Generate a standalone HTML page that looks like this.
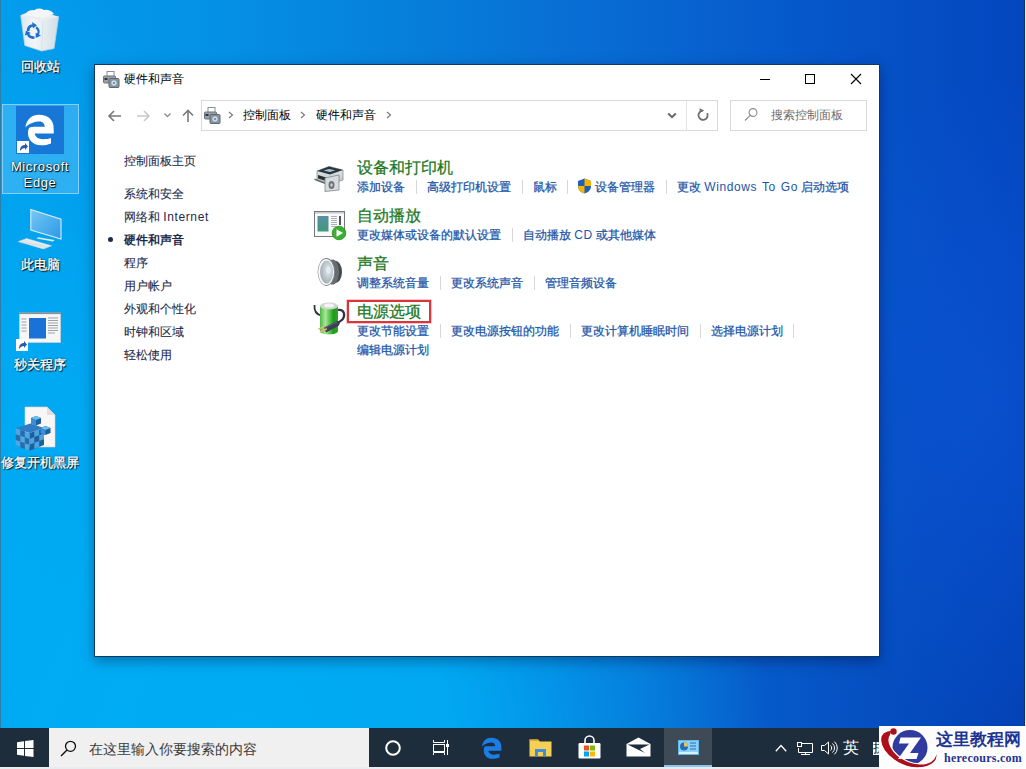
<!DOCTYPE html>
<html><head><meta charset="utf-8">
<style>
*{margin:0;padding:0;box-sizing:border-box}
html,body{width:1026px;height:769px;overflow:hidden}
body{position:relative;font-family:"Liberation Sans",sans-serif;background:#0a7ad8}
.a{position:absolute;white-space:nowrap}
#bg{position:absolute;left:0;top:0;width:1026px;height:769px;
background:radial-gradient(ellipse 240px 640px at 0px 560px,rgba(0,172,244,.85) 0%,rgba(0,172,244,.6) 50%,rgba(0,172,244,0) 100%),radial-gradient(ellipse 220px 330px at 990px 400px,rgba(14,90,225,.45) 0%,rgba(14,90,225,0) 100%),radial-gradient(ellipse 360px 520px at 1026px 769px,rgba(0,10,80,.08) 0%,rgba(0,10,80,0) 100%),radial-gradient(ellipse 520px 600px at 250px 769px,rgba(0,172,244,1) 0%,rgba(0,172,244,.9) 40%,rgba(0,172,244,.5) 65%,rgba(0,172,244,.2) 86%,rgba(0,172,244,0) 100%),linear-gradient(90deg,#029aea 0%,#0492e6 20%,#0680da 39%,#086cd4 58%,#0658ca 78%,#0448c0 97%,#0446be 100%)}
#bg:after{content:"";position:absolute;left:0;top:0;width:1px;height:728px;background:#2b7fa8}
#bg:before{content:"";position:absolute;left:1024px;top:0;width:2px;height:728px;background:linear-gradient(90deg,#12306e 0 50%,#dceeff 50% 100%)}
.dl{color:#fff;font-size:13px;line-height:16px;text-align:center;-webkit-text-stroke-width:.3px;text-shadow:1px 1px 1px #000,0 0 2px rgba(0,0,0,.85)}
#win{position:absolute;left:94px;top:64px;width:786px;height:593px;background:#fff;border:1px solid #0d3a60;box-shadow:0 4px 12px rgba(0,0,40,.35)}
.t12{font-size:12px;line-height:16px}
.side{color:#1e2a4a;-webkit-text-stroke-width:.1px}
.h{font-size:16px;line-height:20px;color:#1b781e;-webkit-text-stroke-width:.25px}
.lk{font-size:12px;line-height:16px;color:#1c55a8;-webkit-text-stroke-width:.25px}
.sep{position:absolute;width:1px;height:14px;background:#d8d8d8}
#tb{position:absolute;left:0;top:728px;width:1026px;height:39px;background:#1d2d3b}
svg{position:absolute;overflow:visible}
i.c{display:inline-block;width:1em;font-style:normal;text-align:center}
.lat{letter-spacing:.6px;word-spacing:1px;-webkit-text-stroke-width:0}
</style></head><body>
<div id="bg"></div>

<!-- DESKTOP -->
<!-- recycle bin -->
<svg style="left:16px;top:4px" width="48" height="52" viewBox="0 0 48 52">
  <defs><linearGradient id="rb" x1="0" x2="1"><stop offset="0" stop-color="#d9e8f2"/><stop offset=".35" stop-color="#f3f6f8"/><stop offset=".6" stop-color="#e6edf1"/><stop offset="1" stop-color="#cfdde6"/></linearGradient></defs>
  <path d="M4.7 11.5 L17 6.5 L42.6 12.8 L38 44.5 L25.7 47 L8.8 41.5 Z" fill="url(#rb)" stroke="#b8d4e6" stroke-width=".8"/>
  <path d="M4.7 11.5 L17 6.5 L42.6 12.8 L27 17 Z" fill="#e9eef1"/>
  <path d="M9 11 Q12 5 18 6.5 Q22 3 28 6 Q34 5 38 10 L27 14 Z" fill="#f4f6f7"/>
  <path d="M27 17 L25.7 47" stroke="#d6e2ea" stroke-width="1"/>
  <g fill="#1e70cc">
    <path d="M11 27 C10.5 23 13 20.5 16.5 20.3 L16 18 L21 21.2 L17 24.5 L16.8 22.8 C14.5 23 13.3 24.8 13.6 27Z"/>
    <path d="M20.5 22.5 C23.5 23.8 24.5 27.5 23 30.5 L25 31.5 L19.8 34 L19.6 28.8 L21.2 29.6 C22 27.8 21.5 25.6 19.5 24.6Z"/>
    <path d="M18.5 34.8 C15 35.5 12 33.5 11 30.8 L8.8 31.6 L10 26.5 L14.8 29 L13.2 29.8 C14.2 31.8 16.2 32.6 18.5 32.2Z"/>
  </g>
</svg>
<div class="a dl" style="left:10px;top:59px;width:60px"><i class="c">回</i><i class="c">收</i><i class="c">站</i></div>

<!-- edge -->
<div class="a" style="left:2px;top:104px;width:77px;height:90px;background:rgba(160,215,255,.28);border:1px solid rgba(200,235,255,.55)"></div>
<div class="a" style="left:16px;top:106px;width:48px;height:48px;background:#1876d6"></div>
<svg style="left:16px;top:106px" width="48" height="48" viewBox="0 0 48 48">
  <path fill-rule="evenodd" d="M9.4 21.5C10.5 13 16 8.7 23 8.7C32 8.7 37.6 14 37.6 21.5L37.8 27.5L18.7 27.5C19.2 31 22.5 33.2 27 33.2C30 33.2 33 32.8 35 32L35 37.5C32 38.8 28.5 39.3 25 39.3C16.5 39.3 12 33.5 12 27C12 24.5 12.5 22.5 13.5 21.5C15 21 17 20.8 18.5 20.8L28.8 20.8C28.5 17.8 26.5 15.6 23.7 15.6C19 15.6 13 17.5 9.4 21.5Z" fill="#fff"/>
</svg>
<div class="a" style="left:17px;top:141px;width:12px;height:12px;background:#fff"></div>
<svg style="left:18px;top:142px" width="10" height="10" viewBox="0 0 10 10"><path d="M2 9 C2 5 4 3 7 3 L7 1 L10 4.5 L7 8 L7 6 C5 6 3.5 7 2 9Z" fill="#2a5aa8"/></svg>
<div class="a dl" style="left:0px;top:159px;width:80px"><span class="lat">Microsoft</span><br><span class="lat">Edge</span></div>

<!-- this pc -->
<svg style="left:17px;top:206px" width="46" height="44" viewBox="0 0 46 44">
  <defs><linearGradient id="mo" x1="0" y1="0" x2="1" y2="1"><stop offset="0" stop-color="#7cc8f4"/><stop offset=".5" stop-color="#4eb0ee"/><stop offset="1" stop-color="#2f9ae6"/></linearGradient></defs>
  <path d="M13.8 3.4 L44 13.2 L44 33 L13.8 24 Z" fill="url(#mo)" stroke="#d6ecfa" stroke-width="1.1"/>
  <path d="M21 31.2 L37.7 34 L36 35.6 L19.5 32.6Z" fill="#e4ecf0"/>
  <path d="M1.3 35.6 L9.6 32.5 L34.6 39.8 L26.3 42.9 Z" fill="#eef2f4" stroke="#c8d4da" stroke-width=".6"/>
  <g stroke="#c2ccd2" stroke-width=".5"><path d="M4 34.8 L29 42M6.5 33.8 L31.5 41M3 36.5 L28 39.8"/></g>
</svg>
<div class="a dl" style="left:10px;top:257px;width:60px"><i class="c">此</i><i class="c">电</i><i class="c">脑</i></div>

<!-- <i class="c">秒</i><i class="c">关</i><i class="c">程</i><i class="c">序</i> -->
<svg style="left:19px;top:312px" width="42" height="31" viewBox="0 0 42 31">
  <rect x="0.5" y="1" width="41" height="29.5" fill="#f6f6f6" stroke="#c9d0d6" stroke-width=".8"/>
  <rect x="0" y="0.5" width="42" height="1.6" fill="#8d8f92"/>
  <rect x="10" y="6" width="17" height="20.5" fill="#1a72d8"/>
  <g stroke="#9aa3aa" stroke-width="1"><path d="M2.5 7h5M2.5 10h5M2.5 13h5M2.5 16h5M2.5 19h5M29 6h10M29 8.5h10M29 11h10M29 13.5h10M29 16h10M29 18.5h10M29 21h7"/></g>
</svg>
<div class="a" style="left:16px;top:339px;width:12px;height:12px;background:#fff"></div>
<svg style="left:17px;top:340px" width="10" height="10" viewBox="0 0 10 10"><path d="M2 9 C2 5 4 3 7 3 L7 1 L10 4.5 L7 8 L7 6 C5 6 3.5 7 2 9Z" fill="#2a5aa8"/></svg>
<div class="a dl" style="left:0px;top:357px;width:80px"><i class="c">秒</i><i class="c">关</i><i class="c">程</i><i class="c">序</i></div>

<!-- <i class="c">修</i><i class="c">复</i><i class="c">开</i><i class="c">机</i><i class="c">黑</i><i class="c">屏</i> -->
<svg style="left:14px;top:404px" width="44" height="48" viewBox="0 0 44 48">
  <path d="M11 3 L33 3 L41 11 L41 43 L11 43 Z" fill="#f8f6f6" stroke="#d4d0d0" stroke-width=".6"/>
  <path d="M33 3 L33 11 L41 11 Z" fill="#e6dede"/>
  <path d="M1.7 24.3 L16.4 19.4 L30 24 L15.4 29 Z" fill="#2f7cc4"/>
  <path d="M1.7 24.3 L15.4 29 L15.4 46.7 L1.7 41 Z" fill="#4ea6e2"/>
  <path d="M15.4 29 L30 24 L30 41 L15.4 46.7 Z" fill="#1d5f9e"/>
  <g fill="#1d5f9e" opacity=".8">
    <path d="M6.3 25.9 L10.8 27.4 L10.8 33.3 L6.3 31.8Z"/>
    <path d="M1.7 30.2 L6.3 31.8 L6.3 37.6 L1.7 36Z"/>
    <path d="M10.8 33.3 L15.4 34.9 L15.4 40.8 L10.8 39.2Z"/>
    <path d="M6.3 37.6 L10.8 39.2 L10.8 45 L6.3 43.3Z"/>
  </g>
  <g fill="#57aee6" opacity=".85">
    <path d="M20.3 27.3 L25.2 25.6 L25.2 31.3 L20.3 33Z"/>
    <path d="M15.4 34.9 L20.3 33 L20.3 38.8 L15.4 40.8Z"/>
    <path d="M25.2 31.3 L30 29.6 L30 35.3 L25.2 37Z"/>
    <path d="M20.3 38.8 L25.2 37 L25.2 42.8 L20.3 44.8Z"/>
  </g>
  <path d="M17 14 L22 12 L27 14 L27 19.5 L22 21.5 L17 19.5Z" fill="#1d5f9e"/>
  <path d="M17 14 L22 12 L27 14 L22 16Z" fill="#6cc0f0"/>
  <path d="M17 14 L22 16 L22 21.5 L17 19.5Z" fill="#3a8fd6"/>
  <path d="M26.5 24 L31.5 22 L36.5 24 L36.5 29 L31.5 31 L26.5 29Z" fill="#1d5f9e"/>
  <path d="M26.5 24 L31.5 22 L36.5 24 L31.5 26Z" fill="#6cc0f0"/>
  <path d="M26.5 24 L31.5 26 L31.5 31 L26.5 29Z" fill="#3a8fd6"/>
</svg>
<div class="a dl" style="left:-5px;top:455px;width:90px"><i class="c">修</i><i class="c">复</i><i class="c">开</i><i class="c">机</i><i class="c">黑</i><i class="c">屏</i></div>

<!-- WINDOW -->
<div id="win"></div>
<!-- title bar -->
<svg style="left:103px;top:71px" width="17" height="17" viewBox="0 0 17 17">
  <rect x="4" y="0.5" width="7" height="5" fill="#fff" stroke="#8a9096"/>
  <rect x="0.5" y="5" width="12" height="7" rx="1" fill="#9aa1a8" stroke="#6d747b"/>
  <rect x="1.5" y="7" width="3" height="2" fill="#333"/>
  <rect x="6" y="7.5" width="10" height="9" rx="1" fill="#8d969e" stroke="#5f676e"/>
  <circle cx="11" cy="12" r="3.3" fill="#c8dbe8" stroke="#6b7f8e" stroke-width=".8"/>
  <circle cx="11" cy="12" r="1" fill="#6b7f8e"/>
</svg>
<div class="a t12" style="left:124px;top:71px;color:#000"><i class="c">硬</i><i class="c">件</i><i class="c">和</i><i class="c">声</i><i class="c">音</i></div>
<div class="a" style="left:760px;top:79px;width:10px;height:1px;background:#000"></div>
<div class="a" style="left:805px;top:74px;width:10px;height:10px;border:1px solid #000"></div>
<svg style="left:850px;top:73px" width="12" height="12" viewBox="0 0 12 12"><path d="M1 1L11 11M11 1L1 11" stroke="#000" stroke-width="1.1"/></svg>

<!-- nav -->
<svg style="left:107px;top:109px" width="16" height="14" viewBox="0 0 16 14"><path d="M14 7H2M7 2L2 7L7 12" fill="none" stroke="#7a7a7a" stroke-width="1.6"/></svg>
<svg style="left:136px;top:109px" width="16" height="14" viewBox="0 0 16 14"><path d="M1 7H13M8 2L13 7L8 12" fill="none" stroke="#c9c9c9" stroke-width="1.6"/></svg>
<svg style="left:163px;top:112px" width="9" height="6" viewBox="0 0 9 6"><path d="M1.5 1.5L4.5 4.5L7.5 1.5" fill="none" stroke="#8a8a8a" stroke-width="1.3"/></svg>
<svg style="left:181px;top:109px" width="14" height="14" viewBox="0 0 14 14"><path d="M7 13V1.5M2 6.5L7 1.5L12 6.5" fill="none" stroke="#7a7a7a" stroke-width="1.6"/></svg>

<div class="a" style="left:201px;top:100px;width:517px;height:31px;border:1px solid #d9d9d9"></div>
<div class="a" style="left:686px;top:101px;width:1px;height:29px;background:#e3e3e3"></div>
<svg style="left:204px;top:107px" width="17" height="17" viewBox="0 0 17 17">
  <rect x="4" y="0.5" width="7" height="5" fill="#fff" stroke="#8a9096"/>
  <rect x="0.5" y="5" width="12" height="7" rx="1" fill="#9aa1a8" stroke="#6d747b"/>
  <rect x="1.5" y="7" width="3" height="2" fill="#333"/>
  <rect x="6" y="7.5" width="10" height="9" rx="1" fill="#8d969e" stroke="#5f676e"/>
  <circle cx="11" cy="12" r="3.3" fill="#c8dbe8" stroke="#6b7f8e" stroke-width=".8"/>
  <circle cx="11" cy="12" r="1" fill="#6b7f8e"/>
</svg>
<svg style="left:228px;top:111px" width="6" height="8" viewBox="0 0 6 8"><path d="M1 1L4.5 4L1 7" fill="none" stroke="#7a7a7a" stroke-width="1.2"/></svg>
<div class="a t12" style="left:243px;top:107px;color:#000"><i class="c">控</i><i class="c">制</i><i class="c">面</i><i class="c">板</i></div>
<svg style="left:300px;top:111px" width="6" height="8" viewBox="0 0 6 8"><path d="M1 1L4.5 4L1 7" fill="none" stroke="#7a7a7a" stroke-width="1.2"/></svg>
<div class="a t12" style="left:316px;top:107px;color:#000"><i class="c">硬</i><i class="c">件</i><i class="c">和</i><i class="c">声</i><i class="c">音</i></div>
<svg style="left:386px;top:111px" width="6" height="8" viewBox="0 0 6 8"><path d="M1 1L4.5 4L1 7" fill="none" stroke="#7a7a7a" stroke-width="1.2"/></svg>
<svg style="left:667px;top:112px" width="10" height="7" viewBox="0 0 10 7"><path d="M1.2 1.5L5 5.2L8.8 1.5" fill="none" stroke="#666" stroke-width="2"/></svg>
<svg style="left:696px;top:107px" width="14" height="15" viewBox="0 0 14 15"><path d="M7 3.6A4.6 4.6 0 1 0 11.2 6.2" fill="none" stroke="#707070" stroke-width="1.8"/><path d="M3.6 1.2L8.2 3.6L3.6 6Z" fill="#707070"/></svg>

<div class="a" style="left:730px;top:100px;width:137px;height:31px;border:1px solid #d9d9d9"></div>
<svg style="left:743px;top:107px" width="15" height="15" viewBox="0 0 15 15"><circle cx="10" cy="5.5" r="3.9" fill="none" stroke="#8c8c8c" stroke-width="1.1"/><path d="M7.2 8.3L2 13.5" stroke="#8c8c8c" stroke-width="1.1"/></svg>
<div class="a t12" style="left:771px;top:107px;color:#6d6d6d"><i class="c">搜</i><i class="c">索</i><i class="c">控</i><i class="c">制</i><i class="c">面</i><i class="c">板</i></div>

<!-- sidebar -->
<div class="a t12 side" style="left:124px;top:153px"><i class="c">控</i><i class="c">制</i><i class="c">面</i><i class="c">板</i><i class="c">主</i><i class="c">页</i></div>
<div class="a t12 side" style="left:124px;top:186px"><i class="c">系</i><i class="c">统</i><i class="c">和</i><i class="c">安</i><i class="c">全</i></div>
<div class="a t12 side" style="left:124px;top:209px"><i class="c">网</i><i class="c">络</i><i class="c">和</i> <span class="lat">Internet</span></div>
<div class="a" style="left:108px;top:237px;width:5px;height:5px;border-radius:50%;background:#1e2a4a"></div>
<div class="a t12 side" style="left:124px;top:232px;font-weight:bold;-webkit-text-stroke-width:0"><i class="c">硬</i><i class="c">件</i><i class="c">和</i><i class="c">声</i><i class="c">音</i></div>
<div class="a t12 side" style="left:124px;top:255px"><i class="c">程</i><i class="c">序</i></div>
<div class="a t12 side" style="left:124px;top:278px"><i class="c">用</i><i class="c">户</i><i class="c">帐</i><i class="c">户</i></div>
<div class="a t12 side" style="left:124px;top:301px"><i class="c">外</i><i class="c">观</i><i class="c">和</i><i class="c">个</i><i class="c">性</i><i class="c">化</i></div>
<div class="a t12 side" style="left:124px;top:324px"><i class="c">时</i><i class="c">钟</i><i class="c">和</i><i class="c">区</i><i class="c">域</i></div>
<div class="a t12 side" style="left:124px;top:347px"><i class="c">轻</i><i class="c">松</i><i class="c">使</i><i class="c">用</i></div>

<!-- MAIN -->
<svg style="left:314px;top:166px" width="30" height="26" viewBox="0 0 30 26">
  <defs><linearGradient id="pb" x1="0" x2="0" y1="0" y2="1"><stop offset="0" stop-color="#e9ecee"/><stop offset="1" stop-color="#b8bfc4"/></linearGradient></defs>
  <path d="M3 5 L15 0.5 L29 4 L29 14 L16 18 L3 14 Z" fill="url(#pb)" stroke="#8b9297" stroke-width=".8"/>
  <path d="M3 5 L15 0.5 L29 4 L16 8.5 Z" fill="#2c353c"/>
  <path d="M9.5 4.6 L15 2.9 L21.5 4.3 L16 6.1 Z" fill="#a8c8d6"/>
  <path d="M4 9 L12 11.5 L12 15 L4 12.5Z" fill="#2a2f33"/>
  <path d="M0.5 12.5 L11 16.5 L11 18 L0.5 14Z" fill="#5a6268"/>
  <path d="M11 12 L25 9 L25 24 L11 25.5 Z" fill="#d6dbde" stroke="#7f878c" stroke-width=".8"/>
  <ellipse cx="17.5" cy="19" rx="3" ry="4" fill="#6b7378"/>
  <ellipse cx="17.5" cy="19" rx="1.2" ry="1.7" fill="#cfd5d8"/>
</svg>
<svg style="left:314px;top:211px" width="33" height="29" viewBox="0 0 33 29">
  <rect x="0.5" y="0.5" width="30" height="25" fill="#fafafa" stroke="#76797c"/>
  <rect x="1" y="1" width="29" height="1.6" fill="#c9cdd0"/>
  <defs><linearGradient id="ap" x1="0" x2="0" y1="0" y2="1"><stop offset="0" stop-color="#5b8fa8"/><stop offset="1" stop-color="#3d9a7a"/></linearGradient></defs>
  <rect x="3.5" y="5" width="11" height="15.5" fill="url(#ap)"/>
  <g stroke="#9aa0a4" stroke-width=".8"><path d="M17 5.5h6M17 7.5h6M17 9.5h6M17 11.5h6M17 13.5h6M17 15.5h5"/></g>
  <rect x="25" y="5" width="2" height="9" fill="#4d5a60"/>
  <circle cx="25" cy="22" r="6.8" fill="#38b030"/>
  <circle cx="25" cy="22" r="6.8" fill="none" stroke="#2a8a22" stroke-width=".8"/>
  <path d="M22.5 18.2 L29 22 L22.5 25.8Z" fill="#fff"/>
</svg>
<svg style="left:310px;top:252px" width="40" height="40" viewBox="0 0 40 40">
  <defs><radialGradient id="sp" cx=".62" cy=".42" r=".7"><stop offset="0" stop-color="#e9f0f2"/><stop offset=".35" stop-color="#c9d3d7"/><stop offset="1" stop-color="#9aa5aa"/></radialGradient></defs>
  <ellipse cx="25" cy="20" rx="7" ry="11.2" fill="#45494d"/>
  <ellipse cx="22.5" cy="20" rx="6.5" ry="12.6" fill="#676c71"/>
  <ellipse cx="16.4" cy="20" rx="8.8" ry="13.9" fill="#7d8388"/>
  <ellipse cx="16.1" cy="20" rx="8" ry="13.1" fill="#f5f7f8"/>
  <ellipse cx="16.6" cy="20" rx="6.5" ry="11.4" fill="url(#sp)"/>
  <ellipse cx="18.5" cy="18" rx="2" ry="3.2" fill="#e4ecee"/>
</svg>
<svg style="left:308px;top:298px" width="40" height="40" viewBox="0 0 40 40">
  <defs><linearGradient id="bt" x1="0" x2="1"><stop offset="0" stop-color="#4cb848"/><stop offset=".3" stop-color="#a6e896"/><stop offset=".75" stop-color="#18a014"/><stop offset="1" stop-color="#3e9a3a"/></linearGradient></defs>
  <path d="M6.5 7 C6 13 9 16.5 13 17.5" fill="none" stroke="#2e3440" stroke-width="1.8"/>
  <path d="M12 8 V33 C12 37.5 30 37.5 30 33 V8 Z" fill="url(#bt)"/>
  <ellipse cx="21" cy="8" rx="9" ry="3.6" fill="#cfd5d0"/>
  <ellipse cx="21" cy="7.6" rx="5" ry="2" fill="#f3f5f3"/>
  <path d="M30 12 C36.5 11 37.5 17.5 34.5 21.5 C32.5 23.5 30.5 24.5 28 25" fill="none" stroke="#2e3440" stroke-width="2.2"/>
  <path d="M16 29.5 L29 23 L32 25 L30.5 28 L18 34.5 Z" fill="#3b4052"/>
  <path d="M16.5 30 L29 24" stroke="#6a7088" stroke-width=".8"/>
  <path d="M10 30.5 L17 27.2 L17.8 28.6 L10.8 31.9 Z" fill="#d6ba6a"/>
  <path d="M11.5 33.3 L18.5 30 L19.3 31.4 L12.3 34.7 Z" fill="#d6ba6a"/>
</svg>
<div class="a h" style="left:357px;top:158px"><i class="c">设</i><i class="c">备</i><i class="c">和</i><i class="c">打</i><i class="c">印</i><i class="c">机</i></div>
<div class="a lk" style="left:357px;top:179px"><i class="c">添</i><i class="c">加</i><i class="c">设</i><i class="c">备</i></div>
<div class="sep" style="left:416px;top:180px"></div>
<div class="a lk" style="left:427px;top:179px"><i class="c">高</i><i class="c">级</i><i class="c">打</i><i class="c">印</i><i class="c">机</i><i class="c">设</i><i class="c">置</i></div>
<div class="sep" style="left:522px;top:180px"></div>
<div class="a lk" style="left:533px;top:179px"><i class="c">鼠</i><i class="c">标</i></div>
<div class="sep" style="left:567px;top:180px"></div>
<svg style="left:577px;top:178px" width="15" height="16" viewBox="0 0 15 16">
  <path d="M7.5 0.5L14 3V8C14 12 11 14.5 7.5 15.5C4 14.5 1 12 1 8V3Z" fill="#1f5fb8"/>
  <path d="M7.5 0.5V8H14V3Z" fill="#f4b400"/><path d="M7.5 8V15.5C4 14.5 1 12 1 8Z" fill="#f4b400"/>
</svg>
<div class="a lk" style="left:595px;top:179px"><i class="c">设</i><i class="c">备</i><i class="c">管</i><i class="c">理</i><i class="c">器</i></div>
<div class="sep" style="left:666px;top:180px"></div>
<div class="a lk" style="left:677px;top:179px"><i class="c">更</i><i class="c">改</i> <span class="lat">Windows To Go</span> <i class="c">启</i><i class="c">动</i><i class="c">选</i><i class="c">项</i></div>

<div class="a h" style="left:357px;top:206px"><i class="c">自</i><i class="c">动</i><i class="c">播</i><i class="c">放</i></div>
<div class="a lk" style="left:357px;top:227px"><i class="c">更</i><i class="c">改</i><i class="c">媒</i><i class="c">体</i><i class="c">或</i><i class="c">设</i><i class="c">备</i><i class="c">的</i><i class="c">默</i><i class="c">认</i><i class="c">设</i><i class="c">置</i></div>
<div class="sep" style="left:512px;top:228px"></div>
<div class="a lk" style="left:523px;top:227px"><i class="c">自</i><i class="c">动</i><i class="c">播</i><i class="c">放</i> <span class="lat">CD</span> <i class="c">或</i><i class="c">其</i><i class="c">他</i><i class="c">媒</i><i class="c">体</i></div>

<div class="a h" style="left:357px;top:254px"><i class="c">声</i><i class="c">音</i></div>
<div class="a lk" style="left:357px;top:275px"><i class="c">调</i><i class="c">整</i><i class="c">系</i><i class="c">统</i><i class="c">音</i><i class="c">量</i></div>
<div class="sep" style="left:440px;top:276px"></div>
<div class="a lk" style="left:451px;top:275px"><i class="c">更</i><i class="c">改</i><i class="c">系</i><i class="c">统</i><i class="c">声</i><i class="c">音</i></div>
<div class="sep" style="left:534px;top:276px"></div>
<div class="a lk" style="left:545px;top:275px"><i class="c">管</i><i class="c">理</i><i class="c">音</i><i class="c">频</i><i class="c">设</i><i class="c">备</i></div>

<div class="a h" style="left:357px;top:302px"><i class="c">电</i><i class="c">源</i><i class="c">选</i><i class="c">项</i></div>
<div class="a" style="left:347px;top:300px;width:84px;height:23px;border:2px solid #dc3438;box-shadow:0 0 0 .6px rgba(220,52,56,.45)"></div>
<div class="a lk" style="left:357px;top:323px"><i class="c">更</i><i class="c">改</i><i class="c">节</i><i class="c">能</i><i class="c">设</i><i class="c">置</i></div>
<div class="sep" style="left:440px;top:324px"></div>
<div class="a lk" style="left:451px;top:323px"><i class="c">更</i><i class="c">改</i><i class="c">电</i><i class="c">源</i><i class="c">按</i><i class="c">钮</i><i class="c">的</i><i class="c">功</i><i class="c">能</i></div>
<div class="sep" style="left:570px;top:324px"></div>
<div class="a lk" style="left:581px;top:323px"><i class="c">更</i><i class="c">改</i><i class="c">计</i><i class="c">算</i><i class="c">机</i><i class="c">睡</i><i class="c">眠</i><i class="c">时</i><i class="c">间</i></div>
<div class="sep" style="left:700px;top:324px"></div>
<div class="a lk" style="left:711px;top:323px"><i class="c">选</i><i class="c">择</i><i class="c">电</i><i class="c">源</i><i class="c">计</i><i class="c">划</i></div>
<div class="sep" style="left:793px;top:324px"></div>
<div class="a lk" style="left:357px;top:342px"><i class="c">编</i><i class="c">辑</i><i class="c">电</i><i class="c">源</i><i class="c">计</i><i class="c">划</i></div>


<!-- TASKBAR -->
<div id="tb"></div>
<svg style="left:17px;top:740px" width="17" height="17" viewBox="0 0 17 17"><path d="M0 2.3L7 1.3V8H0Z M8 1.1L16.5 0V8H8Z M0 9H7V15.7L0 14.7Z M8 9H16.5V17L8 15.9Z" fill="#fff"/></svg>
<div class="a" style="left:49px;top:728px;width:320px;height:39px;background:#f0f0f0"></div>
<svg style="left:60px;top:740px" width="17" height="17" viewBox="0 0 17 17"><circle cx="10.5" cy="6.3" r="5" fill="none" stroke="#111" stroke-width="1.3"/><path d="M7 10L1 16" stroke="#111" stroke-width="1.5"/></svg>
<div class="a" style="left:89px;top:740px;color:#3a3a3a;font-size:14px;line-height:18px"><i class="c">在</i><i class="c">这</i><i class="c">里</i><i class="c">输</i><i class="c">入</i><i class="c">你</i><i class="c">要</i><i class="c">搜</i><i class="c">索</i><i class="c">的</i><i class="c">内</i><i class="c">容</i></div>
<svg style="left:385px;top:740px" width="16" height="16" viewBox="0 0 16 16"><circle cx="8" cy="8" r="6.8" fill="none" stroke="#fff" stroke-width="2"/></svg>
<svg style="left:432px;top:740px" width="18" height="16" viewBox="0 0 18 16"><g fill="none" stroke="#fff" stroke-width="1"><path d="M1.5 0V2.5H12.5V0"/><rect x="1.5" y="4.5" width="11" height="7"/><path d="M1.5 15V12.5H12.5V15"/><path d="M15.5 0V15"/></g><rect x="14" y="4" width="3" height="3" fill="#fff"/></svg>
<svg style="left:481px;top:737px" width="22" height="23" viewBox="9 7.5 30 33.5">
  <path fill-rule="evenodd" d="M9.4 21.5C10.5 13 16 8.7 23 8.7C32 8.7 37.6 14 37.6 21.5L37.8 27.5L18.7 27.5C19.2 31 22.5 33.2 27 33.2C30 33.2 33 32.8 35 32L35 37.5C32 38.8 28.5 39.3 25 39.3C16.5 39.3 12 33.5 12 27C12 24.5 12.5 22.5 13.5 21.5C15 21 17 20.8 18.5 20.8L28.8 20.8C28.5 17.8 26.5 15.6 23.7 15.6C19 15.6 13 17.5 9.4 21.5Z" fill="#1a7ee6"/>
</svg>
<svg style="left:529px;top:738px" width="23" height="19" viewBox="0 0 23 19">
  <path d="M0.5 1.5H9L11 3.5H22.5V18.5H0.5Z" fill="#f6cf55"/>
  <path d="M0.5 1.5H9L10 3H0.5Z" fill="#e0a63a"/>
  <path d="M6 18V11H17V18H14V14H9V18Z" fill="#3c8fe0"/>
  <rect x="9" y="14" width="5" height="4" fill="#f6cf55"/>
</svg>
<svg style="left:578px;top:736px" width="23" height="23" viewBox="0 0 23 23">
  <path d="M7 7V4.5A4.5 4.5 0 0 1 16 4.5V7" fill="none" stroke="#fff" stroke-width="1.6"/>
  <rect x="0.5" y="7" width="22" height="15.5" rx="1.2" fill="#fff"/>
  <rect x="6" y="9.5" width="5" height="5" fill="#f25022"/><rect x="12" y="9.5" width="5" height="5" fill="#7fba00"/>
  <rect x="6" y="15.5" width="5" height="5" fill="#00a4ef"/><rect x="12" y="15.5" width="5" height="5" fill="#ffb900"/>
</svg>
<svg style="left:626px;top:737px" width="25" height="20" viewBox="0 0 25 20">
  <path d="M0.5 7L12.5 0.5L24.5 7V19.5H0.5Z" fill="#fff"/>
  <path d="M1.5 7.5H23.5L14 12L19 16Z" fill="#1d2d3b"/>
</svg>
<div class="a" style="left:664px;top:728px;width:48px;height:39px;background:#3e4a56"></div>
<div class="a" style="left:664px;top:765px;width:48px;height:2px;background:#8cc4ee"></div>
<svg style="left:678px;top:740px" width="21" height="15" viewBox="0 0 21 15">
  <rect x="0" y="0" width="21" height="15" fill="#62b7ee"/>
  <rect x="1" y="1" width="19" height="13" fill="#8fd0f6"/>
  <circle cx="6" cy="6.5" r="4" fill="#1e6fc0"/><path d="M6 6.5V2.5A4 4 0 0 1 10 6.5Z" fill="#f4c542"/>
  <path d="M12 3h6M12 6h6M12 9h6" stroke="#1e6fc0" stroke-width="1.2"/>
  <rect x="1" y="12" width="19" height="2" fill="#d9f0ff"/>
</svg>
<svg style="left:775px;top:744px" width="12" height="8" viewBox="0 0 12 8"><path d="M0.8 7.2L6 1.5L11.2 7.2" fill="none" stroke="#fff" stroke-width="1.3"/></svg>
<svg style="left:797px;top:742px" width="17" height="14" viewBox="0 0 17 14"><g fill="none" stroke="#fff" stroke-width="1"><path d="M5 1.5H15.5V10.5H1.5V6"/><path d="M8.5 10.5V12.5M4 12.5H13"/><rect x="0.5" y="0.5" width="4" height="4"/></g></svg>
<svg style="left:820px;top:741px" width="17" height="14" viewBox="0 0 17 14"><g fill="none" stroke="#fff" stroke-width="1"><path d="M1.5 4.5H4.5L8.5 1V13L4.5 9.5H1.5Z"/><path d="M10.5 4.5A3.2 3.2 0 0 1 10.5 9.5"/><path d="M12.5 2.5A6 6 0 0 1 12.5 11.5"/><path d="M14.5 0.7A8.5 8.5 0 0 1 14.5 13.3"/></g></svg>
<div class="a" style="left:843px;top:739px;color:#fff;font-size:16px;line-height:18px"><i class="c">英</i></div>
<div class="a" style="left:873px;top:742px;width:8px;height:13px;background:#fff;overflow:hidden"><span style="position:absolute;left:0;top:-2px;font-size:13px;line-height:16px;color:#000"><i class="c">拼</i></span></div>
<div class="a" style="left:0;top:767px;width:1026px;height:2px;background:#e9ecef"></div>

<!-- watermark -->
<div class="a" style="left:879px;top:726px;width:147px;height:43px;background:#fdfdfd"></div>
<svg style="left:879px;top:726px" width="60" height="43" viewBox="0 0 60 43">
  <circle cx="31" cy="21.5" r="17.5" fill="#2f3b9e"/>
  <path d="M13 4 C6 4 1 8 1.5 14 C2 22 8 29 15 34 C22 39 30 42 38 42 C47 42 54 39 57 34 C58.5 31 58.5 28 57 25 C57 30 55 35 48 37 C42 38.5 35 38 29 35.5 C21 32 15 27 12 21 C10 17 9.5 12 11.5 9.5 Z" fill="#ad0f1a" stroke="#fff" stroke-width="1.3"/>
  <circle cx="14.5" cy="5.5" r="3.2" fill="#ad0f1a"/>
  <path d="M21.5 11.5 H42 L31 27 H39.5 L37.5 33 H19 L30 17.5 H20 Z" fill="#fff"/>
</svg>
<div class="a" style="left:936px;top:729px;font-family:'Liberation Serif',serif;font-weight:bold;font-size:17px;line-height:22px;color:#1c3494"><i class="c">这</i><i class="c">里</i><i class="c">教</i><i class="c">程</i><i class="c">网</i></div>
<div class="a" style="left:944px;top:751px;font-family:'Liberation Serif',serif;font-weight:bold;font-size:12px;line-height:14px;letter-spacing:.25px;color:#1f3390">herecours.com</div>
</body></html>
